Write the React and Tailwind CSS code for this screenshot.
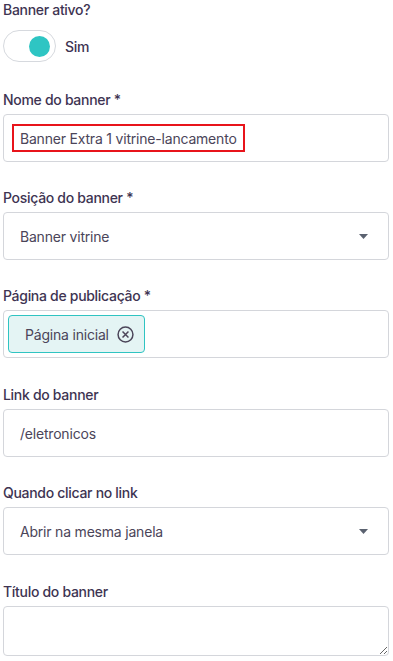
import { useState } from "react";

const font = { fontFamily: "Inter, 'Noto Sans', sans-serif" };

function Label({ children }) {
  return (
    <label className="block text-[14px] leading-[20px] font-medium tracking-[-0.3px] text-[#3e3452]">
      {children}
    </label>
  );
}

function Caret() {
  return (
    <svg width="9" height="5" viewBox="0 0 9 5" className="shrink-0">
      <path d="M0 0h9L4.5 5z" fill="#5b6270" />
    </svg>
  );
}

export default function App() {
  const [ativo, setAtivo] = useState(true);

  return (
    <div style={font} className="bg-white w-[393px] h-[661px] overflow-hidden pl-[3px] pr-[4px]">
      <Label>Banner ativo?</Label>
      <div className="flex items-center gap-[9px] mt-[10px]">
        <button
          onClick={() => setAtivo(!ativo)}
          className="w-[53px] h-[32px] rounded-full border border-[#d6d9de] bg-white flex items-center justify-end pr-[5px]"
        >
          <span className="w-[21px] h-[21px] rounded-full bg-[#2ec5c3]" />
        </button>
        <span className="text-[14px] font-medium tracking-[-0.3px] text-[#3e3452]">Sim</span>
      </div>

      <div className="mt-[28px]">
        <Label>Nome do banner *</Label>
        <div className="mt-[4px] h-[48px] border border-[#d4d6db] rounded-[4px] flex items-center pl-[8px]">
          <span className="border-2 border-[#e8141b] px-[6px] h-[28px] flex items-center text-[14px] tracking-[-0.2px] text-[#4b4559]">
            Banner Extra 1 vitrine-lancamento
          </span>
        </div>
      </div>

      <div className="mt-[26px]">
        <Label>Posição do banner *</Label>
        <div className="mt-[4px] h-[48px] border border-[#d4d6db] rounded-[4px] flex items-center justify-between pl-[16px] pr-[20px]">
          <span className="text-[14px] tracking-[-0.2px] text-[#4b4559]">Banner vitrine</span>
          <Caret />
        </div>
      </div>

      <div className="mt-[26px]">
        <Label>Página de publicação *</Label>
        <div className="mt-[4px] h-[48px] border border-[#d4d6db] rounded-[4px] flex items-center pl-[4px]">
          <span className="h-[38px] w-[137px] flex items-center gap-[8px] pl-[16px] bg-[#e4f4f4] border border-[#2fc4c2] rounded-[4px] text-[14px] tracking-[-0.2px] text-[#4b4559]">
            Página inicial
            <svg width="17" height="17" viewBox="0 0 16 16" fill="none" stroke="#4b4559" strokeWidth="1.4">
              <circle cx="8" cy="8" r="7" />
              <path d="M5.2 5.2l5.6 5.6M10.8 5.2l-5.6 5.6" />
            </svg>
          </span>
        </div>
      </div>

      <div className="mt-[27px]">
        <Label>Link do banner</Label>
        <div className="mt-[4px] h-[48px] border border-[#d4d6db] rounded-[4px] flex items-center pl-[16px]">
          <span className="text-[14px] tracking-[-0.2px] text-[#4b4559]">/eletronicos</span>
        </div>
      </div>

      <div className="mt-[26px]">
        <Label>Quando clicar no link</Label>
        <div className="mt-[4px] h-[48px] border border-[#d4d6db] rounded-[4px] flex items-center justify-between pl-[16px] pr-[20px]">
          <span className="text-[14px] tracking-[-0.2px] text-[#4b4559]">Abrir na mesma janela</span>
          <Caret />
        </div>
      </div>

      <div className="mt-[27px]">
        <Label>Título do banner</Label>
        <textarea className="mt-[4px] block w-full h-[50px] border border-[#d4d6db] rounded-[4px] outline-none" />
      </div>
    </div>
  );
}
